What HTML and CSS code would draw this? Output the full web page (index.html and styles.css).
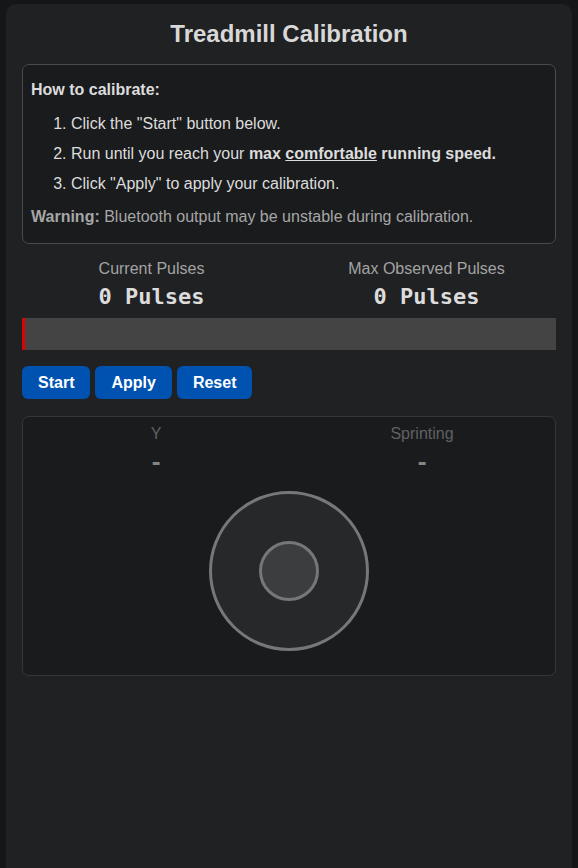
FILE: index.html
```html
<!DOCTYPE html>
<html lang="en">
<head>
  <meta charset="UTF-8" />
  <meta name="viewport" content="width=device-width, initial-scale=1" />
  <title>Treadmill Calibration</title>
  <link rel="stylesheet" href="styles.css">
</head>
<body>
  <div class="card">
    <h1>Treadmill Calibration</h1>

    <div class="howto">
      <div class="howto-title">How to calibrate:</div>
      <ol>
        <li>Click the "Start" button below.</li>
        <li>Run until you reach your <b>max <u>comfortable</u> running speed.</b></li>
        <li>Click "Apply" to apply your calibration.</li>
      </ol>
      <div class="warning"><b>Warning:</b> Bluetooth output may be unstable during calibration.</div>
    </div>

    <div class="stats">
      <div class="stat">
        <div class="stat-label">Current Pulses</div>
        <div class="stat-value" id="current-pulses">0 Pulses</div>
      </div>
      <div class="stat">
        <div class="stat-label">Max Observed Pulses</div>
        <div class="stat-value" id="max-pulses">0 Pulses</div>
      </div>
    </div>

    <div class="bar">
      <div class="bar-fill"></div>
    </div>

    <div class="buttons">
      <button type="button">Start</button>
      <button type="button">Apply</button>
      <button type="button">Reset</button>
    </div>

    <div class="joy-panel">
      <div class="joy-stats">
        <div class="stat">
          <div class="stat-label">Y</div>
          <div class="stat-value">-</div>
        </div>
        <div class="stat">
          <div class="stat-label">Sprinting</div>
          <div class="stat-value">-</div>
        </div>
      </div>
      <div class="joystick">
        <div class="knob"></div>
      </div>
    </div>
  </div>
</body>
</html>
```

FILE: styles.css
```css
html, body {
  margin: 0;
  height: 100%;
}
body {
  font-family: "Liberation Sans", Arial, sans-serif;
  font-size: 16px;
  background-color: #151618;
  color: #dcdcdc;
  padding: 4px 6px 0;
  box-sizing: border-box;
  overflow: hidden;
}
.card {
  background-color: #202123;
  border-radius: 10px 10px 0 0;
  padding: 16px 16px 20px;
  min-height: 100%;
  box-sizing: border-box;
}
h1 {
  margin: 0 0 16px;
  font-size: 24px;
  line-height: 28px;
  text-align: center;
  color: #d8d8d8;
}
.howto {
  background: #1a1b1d;
  border: 1px solid #4a4b4d;
  border-radius: 7px;
  padding: 16px 8px 17px;
  line-height: 18px;
}
.howto-title {
  font-weight: bold;
}
.howto ol {
  margin: 16px 0 15px;
  padding-left: 40px;
}
.howto li {
  margin-bottom: 12px;
}
.howto li:last-child {
  margin-bottom: 0;
}
.warning {
  color: #a6a6a6;
}
.stats {
  display: grid;
  grid-template-columns: 1fr 1fr;
  gap: 16px;
  margin-top: 16px;
}
.stat {
  text-align: center;
}
.stat-label {
  color: #a3a3a3;
  line-height: 18px;
  margin-bottom: 7px;
}
.stat-value {
  font-family: "DejaVu Sans Mono", monospace;
  font-weight: bold;
  font-size: 22px;
  line-height: 23px;
  color: #dcdcdc;
}
.bar {
  margin-top: 10px;
  height: 32px;
  background: #444;
}
.bar-fill {
  width: 3px;
  height: 100%;
  background: #e00000;
}
.buttons {
  display: flex;
  gap: 5px;
  margin-top: 16px;
}
.buttons button {
  font-family: inherit;
  font-size: 16px;
  font-weight: bold;
  color: white;
  background-color: #0052b0;
  border: none;
  border-radius: 6px;
  height: 33px;
  padding: 0 16px;
  cursor: pointer;
}
.joy-panel {
  margin-top: 17px;
  background: #1a1b1d;
  border: 1px solid #35363a;
  border-radius: 7px;
  padding: 8px 0 24px;
}
.joy-stats {
  display: grid;
  grid-template-columns: 1fr 1fr;
}
.joy-stats .stat-label {
  color: #606163;
  margin-bottom: 8px;
}
.joy-stats .stat-value {
  color: #858585;
}
.joystick {
  width: 154px;
  height: 154px;
  margin: 17px auto 0;
  border: 3px solid #777;
  border-radius: 50%;
  background: #27282a;
  display: flex;
  align-items: center;
  justify-content: center;
}
.knob {
  width: 54px;
  height: 54px;
  border: 3px solid #777;
  border-radius: 50%;
  background: #3c3d3f;
}
```
